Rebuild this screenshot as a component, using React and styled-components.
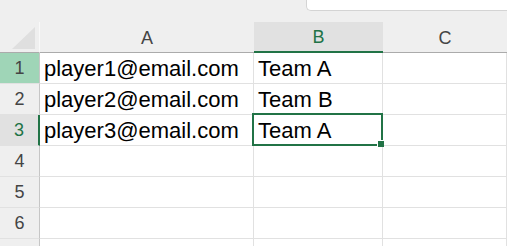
import React from 'react';
import styled, { createGlobalStyle } from 'styled-components';

const GlobalStyle = createGlobalStyle`
  html, body {
    margin: 0;
    padding: 0;
    background: #ffffff;
    overflow: hidden;
  }
  body {
    font-family: "Liberation Sans", Arial, sans-serif;
  }
`;

const Sheet = styled.div`
  width: 507px;
  height: 246px;
  overflow: hidden;
  background: #ffffff;
`;

const TopStrip = styled.div`
  height: 22px;
  background: #efefef;
  display: flex;
  justify-content: flex-end;
  align-items: flex-start;
`;

const FormulaBox = styled.div`
  width: 200px;
  height: 10px;
  background: #ffffff;
  border-left: 1px solid #d4d4d4;
  border-bottom: 1px solid #d4d4d4;
  border-bottom-left-radius: 5px;
`;

const Row = styled.div`
  display: grid;
  grid-template-columns: 40px 214px 129px 1fr;
  height: ${(p) => p.$height}px;
`;

const Corner = styled.div`
  background: #efefef;
  border-right: 1px solid #f9f9f9;
  border-bottom: 1px solid #ababab;
  position: relative;
`;

const CornerTriangle = styled.div`
  position: absolute;
  right: 4px;
  bottom: 3px;
  width: 0;
  height: 0;
  border-left: 23px solid transparent;
  border-bottom: 22px solid #dfdfdf;
`;

const ColHeader = styled.div`
  background: ${(p) => (p.$active ? '#e1e1e1' : '#efefef')};
  border-bottom: ${(p) => (p.$active ? '2px solid #217346' : '1px solid #ababab')};
  color: ${(p) => (p.$active ? '#217346' : '#444444')};
  font-size: 18px;
  display: flex;
  align-items: center;
  justify-content: center;
  padding-top: 2px;
  box-sizing: border-box;
`;

const RowHeader = styled.div`
  background: ${(p) => (p.$tone === 'hover' ? '#9fd5b7' : p.$tone === 'active' ? '#e1e1e1' : '#efefef')};
  border-right: ${(p) => (p.$tone === 'active' ? '2px solid #217346' : '1px solid #c6c6c6')};
  border-bottom: 1px solid #e1e1e1;
  color: ${(p) => (p.$tone === 'active' ? '#217346' : '#444444')};
  font-size: 18px;
  display: flex;
  align-items: center;
  justify-content: center;
  padding-top: 1px;
  box-sizing: border-box;
`;

const Cell = styled.div`
  position: relative;
  border-right: 1px solid #e1e1e1;
  border-bottom: 1px solid #e1e1e1;
  color: #000000;
  font-size: 22px;
  display: flex;
  align-items: center;
  padding: 2px 0 0 4px;
  box-sizing: border-box;
  white-space: nowrap;
`;

const Selection = styled.div`
  position: absolute;
  z-index: 2;
  left: -2px;
  top: -2px;
  right: -1px;
  bottom: -1px;
  border: 2px solid #217346;
  pointer-events: none;
`;

const FillHandle = styled.div`
  position: absolute;
  right: -3px;
  bottom: -3px;
  width: 6px;
  height: 6px;
  background: #217346;
  border-left: 1px solid #ffffff;
  border-top: 1px solid #ffffff;
`;

const rows = [
  { n: 1, a: 'player1@email.com', b: 'Team A', tone: 'hover' },
  { n: 2, a: 'player2@email.com', b: 'Team B' },
  { n: 3, a: 'player3@email.com', b: 'Team A', tone: 'active', selected: true },
  { n: 4 },
  { n: 5 },
  { n: 6 },
  { n: 7, hidden: true },
];

export default function App() {
  return (
    <Sheet>
      <GlobalStyle />
      <TopStrip>
        <FormulaBox />
      </TopStrip>
      <Row $height={31}>
        <Corner>
          <CornerTriangle />
        </Corner>
        <ColHeader>A</ColHeader>
        <ColHeader $active>B</ColHeader>
        <ColHeader>C</ColHeader>
      </Row>
      {rows.map((r) => (
        <Row key={r.n} $height={31}>
          <RowHeader $tone={r.tone}>{r.hidden ? null : r.n}</RowHeader>
          <Cell>{r.a}</Cell>
          <Cell>
            {r.b}
            {r.selected && (
              <Selection>
                <FillHandle />
              </Selection>
            )}
          </Cell>
          <Cell />
        </Row>
      ))}
    </Sheet>
  );
}
